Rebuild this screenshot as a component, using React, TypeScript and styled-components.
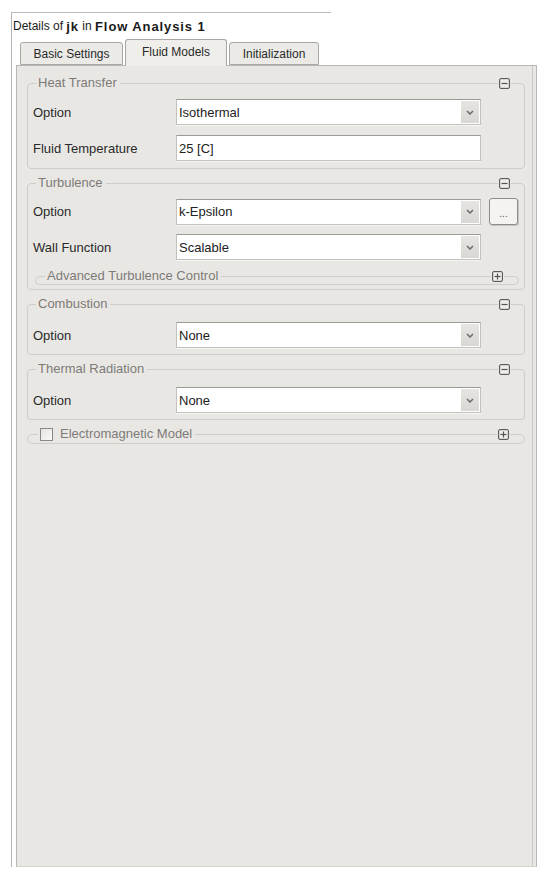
import React from "react";
import styled, { createGlobalStyle } from "styled-components";

const GlobalStyle = createGlobalStyle`
  html, body {
    margin: 0;
    padding: 0;
    background: #ffffff;
  }
  body {
    font-family: "Liberation Sans", Arial, sans-serif;
    color: #222;
  }
  * {
    box-sizing: border-box;
  }
`;

const PANEL_BG = "#e9e7e4";

const Frame = styled.div`
  margin: 12px 0 0 11px;
  width: 527px;
  border-left: 1px solid #b4b4b4;
`;

const TitleBar = styled.div`
  width: 319px;
  height: 27px;
  border-top: 1px solid #bcbcbc;
  display: flex;
  align-items: center;
  padding-left: 1px;
  font-size: 12px;
  color: #1a1a1a;
  white-space: pre;

  b {
    font-weight: 700;
    font-size: 13px;
    letter-spacing: 0.9px;
  }
`;

const TabRow = styled.div`
  display: flex;
  align-items: flex-end;
  gap: 2px;
  height: 26px;
  padding-left: 8px;
  position: relative;
  z-index: 1;
`;

const Tab = styled.div<{ $active?: boolean; $width: number }>`
  width: ${(p) => p.$width}px;
  height: ${(p) => (p.$active ? 27 : 23)}px;
  margin-bottom: ${(p) => (p.$active ? -1 : 0)}px;
  display: flex;
  align-items: center;
  justify-content: center;
  padding-bottom: ${(p) => (p.$active ? 2 : 0)}px;
  border: 1px solid #a9a7a3;
  border-bottom: ${(p) => (p.$active ? "none" : "1px solid #a9a7a3")};
  border-radius: 3px 3px 0 0;
  background: ${(p) => (p.$active ? "#efeeeb" : "#ebeae7")};
  font-size: 12px;
  color: #2a2a2a;
`;

const Body = styled.div`
  margin-left: 4px;
  width: 521px;
  height: 802px;
  border: 1px solid #b9b7b4;
  border-bottom-color: #d6d4d1;
  background: ${PANEL_BG};
  box-shadow: inset -3px 0 0 ${PANEL_BG}, inset -4px 0 0 #c9c7c4;
  padding: 17px 11px 0 10px;
  display: flex;
  flex-direction: column;
  gap: 14px;
`;

const Group = styled.section<{ $padBottom?: number }>`
  border: 1px solid #cfcdc9;
  border-radius: 4px;
  padding: 0 0 ${(p) => p.$padBottom ?? 7}px 5px;
`;

const GroupHead = styled.div<{ $left: number; $right: number }>`
  display: flex;
  align-items: center;
  justify-content: space-between;
  height: 14px;
  margin: -8px ${(p) => p.$right}px 0 ${(p) => p.$left - 5}px;
`;

const Legend = styled.span`
  display: flex;
  align-items: center;
  gap: 7px;
  background: ${PANEL_BG};
  padding: 0 3px 0 2px;
  font-size: 13px;
  line-height: 14px;
  color: #7d7b78;
`;

const Rows = styled.div<{ $top?: number }>`
  display: flex;
  flex-direction: column;
  gap: 10px;
  margin-top: ${(p) => p.$top ?? 9}px;
`;

const Row = styled.div`
  display: grid;
  grid-template-columns: 135px 305px 29px;
  column-gap: 8px;
  align-items: center;
  height: 26px;
`;

const Label = styled.span`
  font-size: 13px;
  color: #2a2a2a;
`;

const Field = styled.div`
  display: flex;
  align-items: stretch;
  height: 26px;
  background: #ffffff;
  border: 1px solid #c3c1bd;
  border-top-color: #9c9a97;
  box-shadow: 0 1px 0 #f6f6f5;
`;

const FieldText = styled.span`
  flex: 1;
  display: flex;
  align-items: center;
  padding-left: 2px;
  font-size: 13px;
  color: #222;
`;

const ArrowBox = styled.span`
  width: 18px;
  margin: 1px;
  display: flex;
  align-items: center;
  justify-content: center;
  background: linear-gradient(#e6e5e2, #d8d7d4);
`;

const MoreButton = styled.button`
  width: 29px;
  height: 27px;
  padding: 0 0 5px;
  display: flex;
  align-items: flex-end;
  justify-content: center;
  border: 1px solid #8e8c89;
  border-radius: 3px;
  background: #f4f3f1;
  box-shadow: 1px 1px 0 #c7c5c2;
  font-family: "Liberation Sans", Arial, sans-serif;
  font-size: 10px;
  line-height: 10px;
  color: #555;
`;

const SubBar = styled.div<{ $margin: string; $padBottom: number }>`
  margin: ${(p) => p.$margin};
  border: 1px solid #cfcdc9;
  border-radius: 6px;
  padding-bottom: ${(p) => p.$padBottom}px;
`;

const Check = styled.span`
  width: 13px;
  height: 13px;
  border: 1px solid #8a8885;
  background: linear-gradient(135deg, #e3e2df, #fbfbfa);
`;

const IconBox = styled.span`
  display: flex;
  background: ${PANEL_BG};
  padding: 0 1px;
`;

const ToggleIcon: React.FC<{ plus?: boolean }> = ({ plus }) => (
  <IconBox>
    <svg width="11" height="11" viewBox="0 0 11 11">
      <rect x="0.5" y="0.5" width="10" height="10" rx="1.5" fill="#d6d5d2" stroke="#5d5c5a" />
      <rect x="2" y="2" width="7" height="7" fill="#eeedea" />
      <line x1="2.5" y1="5.5" x2="8.5" y2="5.5" stroke="#555" strokeWidth="1.2" />
      {plus && <line x1="5.5" y1="2.5" x2="5.5" y2="8.5" stroke="#555" strokeWidth="1.2" />}
    </svg>
  </IconBox>
);

const Chevron = () => (
  <svg width="8" height="5" viewBox="0 0 8 5">
    <path d="M1 1 L4 4 L7 1" fill="none" stroke="#6b6a68" strokeWidth="1.5" />
  </svg>
);

const Select: React.FC<{ value: string }> = ({ value }) => (
  <Field>
    <FieldText>{value}</FieldText>
    <ArrowBox>
      <Chevron />
    </ArrowBox>
  </Field>
);

const Input: React.FC<{ value: string }> = ({ value }) => (
  <Field>
    <FieldText>{value}</FieldText>
  </Field>
);

const App: React.FC = () => {
  return (
    <>
      <GlobalStyle />
      <Frame>
        <TitleBar>
          Details of <b>jk</b> in <b>Flow Analysis 1</b>
        </TitleBar>
        <TabRow>
          <Tab $width={103}>Basic Settings</Tab>
          <Tab $width={102} $active>
            Fluid Models
          </Tab>
          <Tab $width={90}>Initialization</Tab>
        </TabRow>
        <Body>
          <Group>
            <GroupHead $left={8} $right={13}>
              <Legend>Heat Transfer</Legend>
              <ToggleIcon />
            </GroupHead>
            <Rows>
              <Row>
                <Label>Option</Label>
                <Select value="Isothermal" />
              </Row>
              <Row>
                <Label>Fluid Temperature</Label>
                <Input value="25 [C]" />
              </Row>
            </Rows>
          </Group>

          <Group $padBottom={4}>
            <GroupHead $left={8} $right={13}>
              <Legend>Turbulence</Legend>
              <ToggleIcon />
            </GroupHead>
            <Rows $top={8}>
              <Row>
                <Label>Option</Label>
                <Select value="k-Epsilon" />
                <MoreButton>...</MoreButton>
              </Row>
              <Row>
                <Label>Wall Function</Label>
                <Select value="Scalable" />
              </Row>
            </Rows>
            <SubBar $margin="16px 5px 0 2px" $padBottom={1}>
              <GroupHead $left={14} $right={14}>
                <Legend>Advanced Turbulence Control</Legend>
                <ToggleIcon plus />
              </GroupHead>
            </SubBar>
          </Group>

          <Group $padBottom={6}>
            <GroupHead $left={8} $right={13}>
              <Legend>Combustion</Legend>
              <ToggleIcon />
            </GroupHead>
            <Rows $top={11}>
              <Row>
                <Label>Option</Label>
                <Select value="None" />
              </Row>
            </Rows>
          </Group>

          <Group $padBottom={6}>
            <GroupHead $left={8} $right={13}>
              <Legend>Thermal Radiation</Legend>
              <ToggleIcon />
            </GroupHead>
            <Rows $top={11}>
              <Row>
                <Label>Option</Label>
                <Select value="None" />
              </Row>
            </Rows>
          </Group>

          <SubBar $margin="0" $padBottom={2}>
            <GroupHead $left={15} $right={14}>
              <Legend>
                <Check />
                Electromagnetic Model
              </Legend>
              <ToggleIcon plus />
            </GroupHead>
          </SubBar>
        </Body>
      </Frame>
    </>
  );
};

export default App;
